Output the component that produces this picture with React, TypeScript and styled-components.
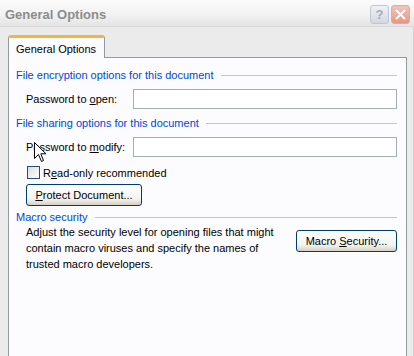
import React from 'react'
import styled, { createGlobalStyle } from 'styled-components'

const GlobalStyle = createGlobalStyle`
  html, body {
    margin: 0;
    padding: 0;
    width: 414px;
    height: 356px;
    overflow: hidden;
    background: #ebebeb;
    font-family: Tahoma, "Liberation Sans", Arial, sans-serif;
    font-size: 11px;
    color: #000;
  }
`

const Window = styled.div`
  position: relative;
  width: 414px;
  height: 356px;
  display: flex;
  flex-direction: column;
  background: #ebebeb;
`

const TitleBar = styled.div`
  height: 27px;
  box-sizing: border-box;
  display: flex;
  align-items: center;
  justify-content: space-between;
  padding: 2px 4px 0 5px;
  background: linear-gradient(#fbfbfb, #f1f1f1 60%, #e4e4e4);
  border-bottom: 1px solid #d8d8d8;
`

const Title = styled.span`
  font-family: "Liberation Sans", Arial, sans-serif;
  font-weight: bold;
  font-size: 13px;
  color: #8c8c8c;
`

const TitleButtons = styled.div`
  display: flex;
  gap: 2px;
`

const CaptionButton = styled.div<{ $close?: boolean }>`
  width: 19px;
  height: 19px;
  border-radius: 3px;
  display: flex;
  align-items: center;
  justify-content: center;
  box-sizing: border-box;
  border: 1px solid ${p => (p.$close ? '#e2a9a1' : '#c3c6d2')};
  background: ${p =>
    p.$close
      ? 'linear-gradient(#f2c3b8, #e49787)'
      : 'linear-gradient(#f0f1f6, #d4d7e2)'};
  color: #a6a9b6;
  font-family: "Liberation Sans", Arial, sans-serif;
  font-weight: bold;
  font-size: 13px;
`

const Body = styled.div`
  flex: 1;
  display: flex;
  flex-direction: column;
  padding: 7px 6px 0 8px;
  border-right: 1px solid #d0d0d0;
`

const TabRow = styled.div`
  display: flex;
  height: 23px;
`

const Tab = styled.div`
  width: 97px;
  box-sizing: border-box;
  white-space: nowrap;
  border: 1px solid #919b9c;
  border-bottom: none;
  border-top: 3px solid #f5b441;
  border-radius: 3px 3px 0 0;
  background: #fcfcfe;
  padding: 5px 0 0 7px;
  position: relative;
  top: 1px;
  z-index: 1;
`

const Panel = styled.div`
  flex: 1;
  border: 1px solid #919b9c;
  border-bottom: none;
  background: #fcfcfe;
  padding: 10px 9px 0 7px;
  display: flex;
  flex-direction: column;
`

const GroupHeader = styled.div<{ $top?: number }>`
  display: flex;
  align-items: center;
  white-space: nowrap;
  color: #0046d5;
  height: 14px;
  margin-top: ${p => p.$top ?? 0}px;
  &::after {
    content: '';
    flex: 1;
    height: 1px;
    margin-left: 7px;
    background: #c5c5c5;
  }
`

const Group = styled.div`
  display: flex;
  flex-direction: column;
  padding: 0 0 0 10px;
`

const FieldRow = styled.div`
  display: flex;
  align-items: center;
  margin-top: 7px;
`

const Label = styled.span`
  width: 107px;
  white-space: nowrap;
`

const TextInput = styled.div`
  flex: 1;
  height: 20px;
  box-sizing: border-box;
  border: 1px solid #a5acb2;
  background: #fff;
`

const CheckRow = styled.div`
  display: flex;
  align-items: center;
  gap: 3px;
  margin-top: 9px;
  margin-left: 1px;
`

const CheckBox = styled.div`
  width: 13px;
  height: 13px;
  box-sizing: border-box;
  border: 1px solid #1c5180;
  background: linear-gradient(135deg, #dcdcd7, #fff);
`

const Button = styled.div<{ $width: number; $top?: number }>`
  width: ${p => p.$width}px;
  height: 22px;
  margin-top: ${p => p.$top ?? 0}px;
  box-sizing: border-box;
  border: 1px solid #003c74;
  border-radius: 3px;
  background: linear-gradient(#fff, #f3f3ef 70%, #d6d0c5);
  display: flex;
  align-items: center;
  justify-content: center;
  white-space: nowrap;
`

const Mn = styled.span`
  text-decoration: underline;
`

const MacroRow = styled.div`
  display: flex;
  align-items: flex-start;
  justify-content: space-between;
`

const MacroText = styled.p`
  margin: 0;
  line-height: 16px;
  white-space: nowrap;
`

const Cursor = styled.svg`
  position: absolute;
  left: 34px;
  top: 142px;
`

export default function App() {
  return (
    <>
      <GlobalStyle />
      <Window>
        <TitleBar>
          <Title>General Options</Title>
          <TitleButtons>
            <CaptionButton>?</CaptionButton>
            <CaptionButton $close>
              <svg width="11" height="11" viewBox="0 0 11 11">
                <path d="M1 1 L10 10 M10 1 L1 10" stroke="#fff" strokeWidth="2" />
              </svg>
            </CaptionButton>
          </TitleButtons>
        </TitleBar>
        <Body>
          <TabRow>
            <Tab>General Options</Tab>
          </TabRow>
          <Panel>
            <GroupHeader>File encryption options for this document</GroupHeader>
            <Group>
              <FieldRow>
                <Label>
                  Password to <Mn>o</Mn>pen:
                </Label>
                <TextInput />
              </FieldRow>
            </Group>
            <GroupHeader $top={7}>File sharing options for this document</GroupHeader>
            <Group>
              <FieldRow>
                <Label>
                  Password to <Mn>m</Mn>odify:
                </Label>
                <TextInput />
              </FieldRow>
              <CheckRow>
                <CheckBox />
                <span>
                  R<Mn>e</Mn>ad-only recommended
                </span>
              </CheckRow>
              <Button $width={116} $top={5}>
                <span>
                  <Mn>P</Mn>rotect Document...
                </span>
              </Button>
            </Group>
            <GroupHeader $top={4}>Macro security</GroupHeader>
            <Group>
              <MacroRow>
                <MacroText>
                  Adjust the security level for opening files that might
                  <br />
                  contain macro viruses and specify the names of
                  <br />
                  trusted macro developers.
                </MacroText>
                <Button $width={101} $top={6}>
                  <span>
                    Macro <Mn>S</Mn>ecurity...
                  </span>
                </Button>
              </MacroRow>
            </Group>
          </Panel>
        </Body>
        <Cursor width="13" height="21" viewBox="0 0 13 21">
          <path
            d="M0.5 0.5 L0.5 16.5 L4.5 12.5 L7.5 19.5 L9.5 18.5 L6.8 11.8 L12 11.8 Z"
            fill="#fff"
            stroke="#000"
            strokeWidth="1"
          />
        </Cursor>
      </Window>
    </>
  )
}
